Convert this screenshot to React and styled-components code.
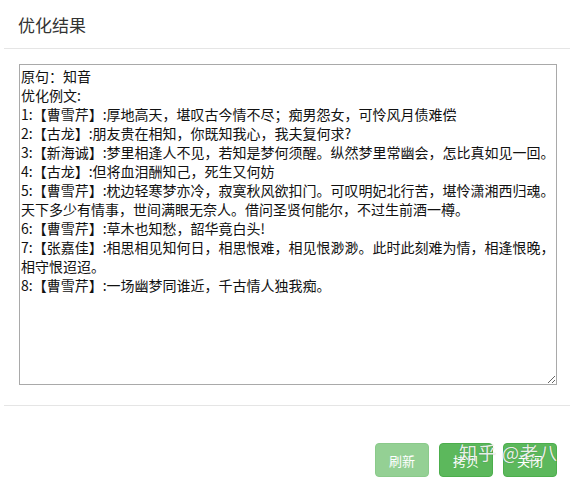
import styled, { createGlobalStyle } from "styled-components";

const GlobalStyle = createGlobalStyle`
  html, body {
    margin: 0;
    padding: 0;
    background: #fff;
    overflow: hidden;
  }
  body {
    font-family: "Noto Sans CJK SC", "Noto Sans", sans-serif;
    color: #333;
  }
`;

const Modal = styled.div`
  position: relative;
  width: 568px;
  margin-left: 4px;
  background: #fff;
`;

const Header = styled.div`
  height: 48px;
  padding: 0 14px;
  display: flex;
  align-items: center;
  border-bottom: 1px solid #e5e5e5;
`;

const Title = styled.h4`
  margin: 0;
  font-size: 17px;
  font-weight: 400;
  color: #333;
`;

const Body = styled.div`
  padding: 15px 15px 20px;
  border-bottom: 1px solid #e5e5e5;
`;

const Result = styled.textarea`
  display: block;
  box-sizing: border-box;
  width: 538px;
  height: 321px;
  margin: 0;
  padding: 2px 1px;
  border: 1px solid #a9a9a9;
  font-family: "Noto Sans CJK SC", sans-serif;
  font-size: 14px;
  line-height: 19px;
  color: #111;
  background: #fff;
  resize: both;
  outline: none;
`;

const Footer = styled.div`
  display: flex;
  justify-content: flex-end;
  gap: 10px;
  padding: 37px 15px 0;
`;

const Button = styled.button`
  width: 54px;
  height: 34px;
  border: 1px solid #4cae4c;
  border-radius: 4px;
  background: #5cb85c;
  color: #fff;
  font-family: "Noto Sans CJK SC", sans-serif;
  font-size: 13px;
  padding: 0;
  opacity: ${({ disabled }) => (disabled ? 0.65 : 1)};
`;

const Watermark = styled.div`
  position: absolute;
  right: 14px;
  bottom: 12px;
  font-family: "Noto Sans CJK SC", sans-serif;
  font-size: 18px;
  color: rgba(255, 255, 255, 0.9);
  text-shadow: 0 0 1px rgba(0, 0, 0, 0.35);
  pointer-events: none;
  letter-spacing: 1px;
`;

const text = `原句：知音
优化例文:
1:【曹雪芹】:厚地高天，堪叹古今情不尽；痴男怨女，可怜风月债难偿
2:【古龙】:朋友贵在相知，你既知我心，我夫复何求?
3:【新海诚】:梦里相逢人不见，若知是梦何须醒。纵然梦里常幽会，怎比真如见一回。
4:【古龙】:但将血泪酬知己，死生又何妨
5:【曹雪芹】:枕边轻寒梦亦冷，寂寞秋风欲扣门。可叹明妃北行苦，堪怜潇湘西归魂。天下多少有情事，世间满眼无奈人。借问圣贤何能尔，不过生前酒一樽。
6:【曹雪芹】:草木也知愁，韶华竟白头!
7:【张嘉佳】:相思相见知何日，相思恨难，相见恨渺渺。此时此刻难为情，相逢恨晚，相守恨迢迢。
8:【曹雪芹】:一场幽梦同谁近，千古情人独我痴。`;

export default function App() {
  return (
    <>
      <GlobalStyle />
      <Modal>
        <Header>
          <Title>优化结果</Title>
        </Header>
        <Body>
          <Result readOnly defaultValue={text} />
        </Body>
        <Footer>
          <Button disabled>刷新</Button>
          <Button>拷贝</Button>
          <Button>关闭</Button>
        </Footer>
        <Watermark>知乎 @老八</Watermark>
      </Modal>
    </>
  );
}
